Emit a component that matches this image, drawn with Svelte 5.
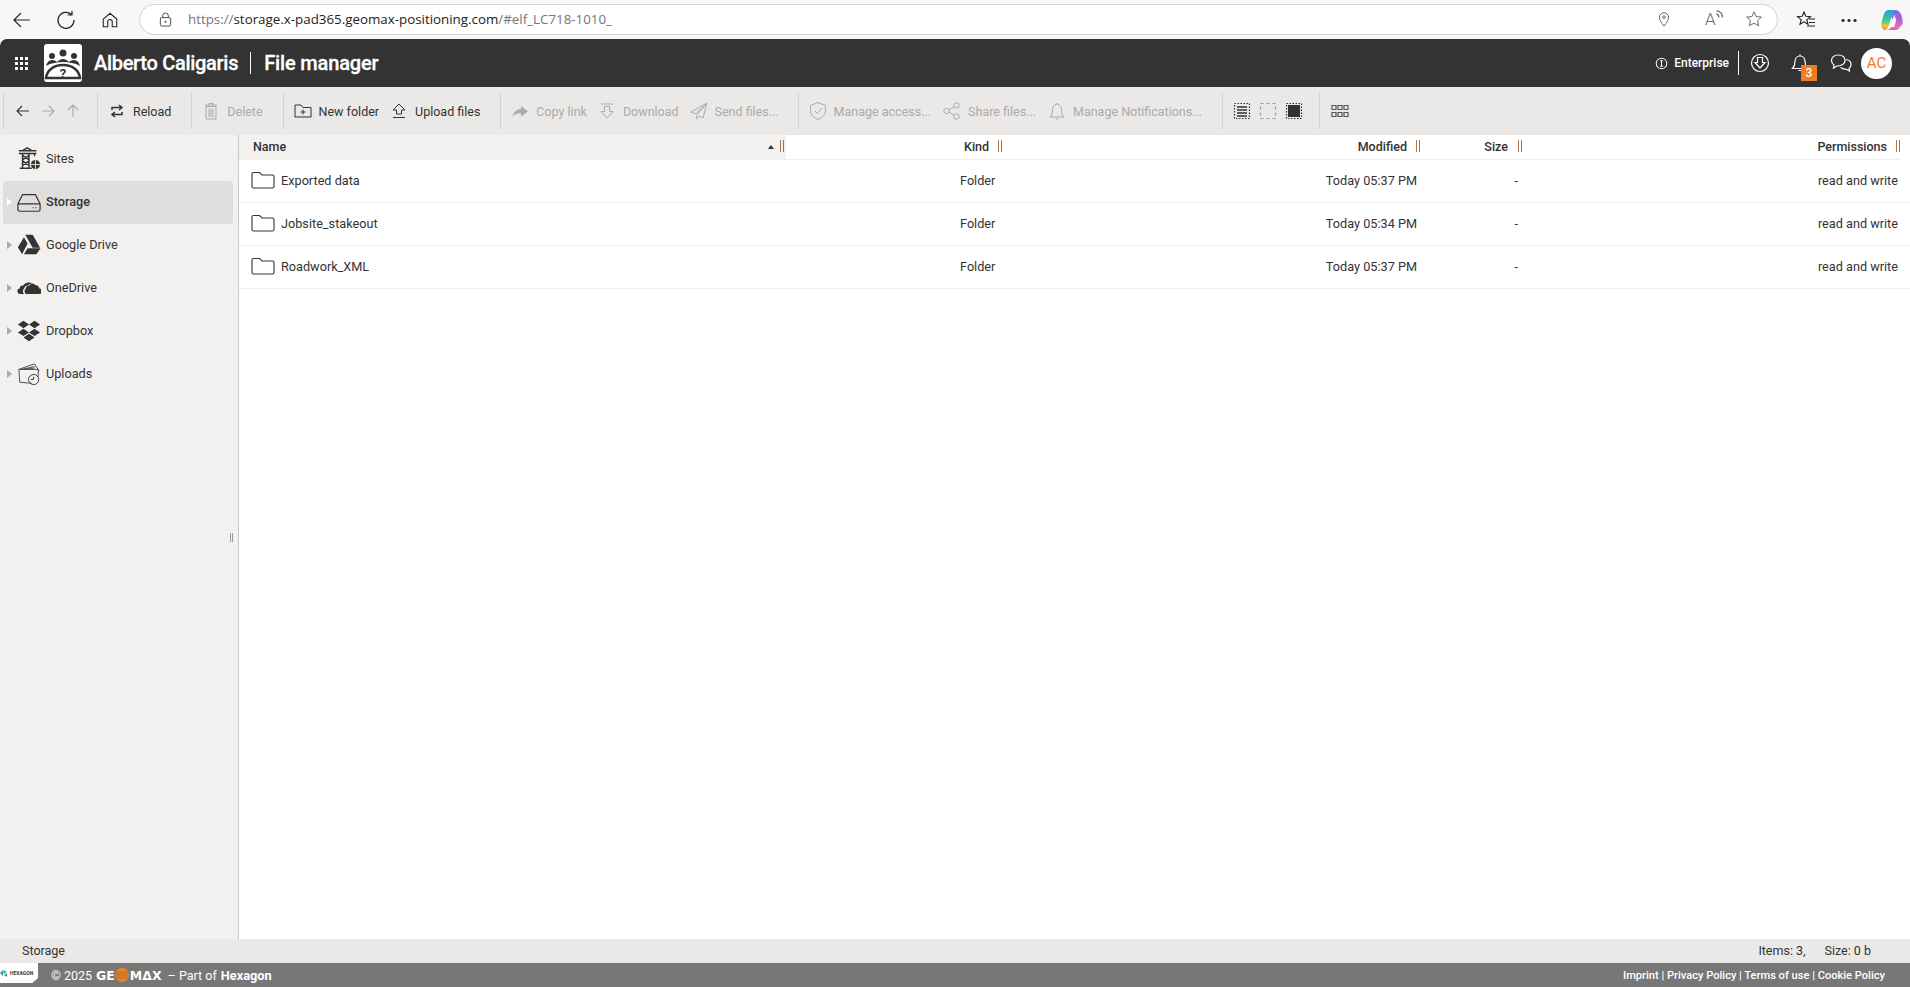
<script>
  const ic = {
    back: '<path d="M16 10H4M9 5l-5 5 5 5"/>',
    fwd: '<path d="M4 10h12M11 5l5 5-5 5"/>',
    up: '<path d="M10 16V4M5 9l5-5 5 5"/>',
    reload: '<path d="M5 9V6.500h9.500M12 4l3 2.500-3 2.500M15 11v2.500H5.500M8 11l-3 2.500 3 2.500" stroke-width="1.500"/>',
    del: '<path d="M4 4h12M8 4V2.500h4V4M5 5.500h10V18H5zM8 7.500v8.500M10 7.500v8.500M12 7.500v8.500"/>',
    newf: '<path d="M2 4h6l2 2.500h8V16H2zM7.500 11h5M10 8.500v5"/>',
    upl: '<path d="M10 3l6 6h-3.500v4h-5V9H4zM4 16.500h12"/>',
    copy: '<path d="M11 5l7 5.500-7 5v-3.200c-4 0-6 1-8.500 3.200C3.500 11.500 6 8.500 11 8z" fill="#aaa" stroke="none"/>',
    dl: '<path d="M4 3h12M7.500 5.500v5H4l6 6.500 6-6.500h-3.500v-5z"/>',
    send: '<path d="M18 2L2 11l4.500 2L18 2zM18 2L8 14l-.5 4 3-3 3.500 2z"/>',
    shield: '<path d="M10 1.500l7.500 3v5c0 4.500-3.500 7.500-7.500 9-4-1.500-7.500-4.500-7.500-9v-5zM6.500 9.500l3 3 4.500-5.500"/>',
    share: '<circle cx="4.500" cy="10" r="2.700"/><circle cx="14.500" cy="4.500" r="2.700"/><circle cx="14.500" cy="15.500" r="2.700"/><path d="M7 9l5-3.300M7 11l5 3.300"/>',
    bell: '<path d="M3 16h14c-2-2-2.500-3.500-2.500-7.500 0-3-2-5.500-4.500-5.500S5.500 5.500 5.500 8.500C5.500 12.500 5 14 3 16zM9 18h2M10 2v1"/>'
  };
  const groups = [
    { items: [{ i: 'reload', t: 'Reload', on: true }] },
    { items: [{ i: 'del', t: 'Delete' }] },
    { tight: 'first', items: [{ i: 'newf', t: 'New folder', on: true }, { i: 'upl', t: 'Upload files', on: true }] },
    { tight: 'all', items: [{ i: 'copy', t: 'Copy link' }, { i: 'dl', t: 'Download' }, { i: 'send', t: 'Send files...' }] },
    { items: [{ i: 'shield', t: 'Manage access...' }, { i: 'share', t: 'Share files...' }, { i: 'bell', t: 'Manage Notifications...' }] }
  ];
  const nav = ['Sites', 'Storage', 'Google Drive', 'OneDrive', 'Dropbox', 'Uploads'];
  const rows = [
    ['Exported data', 'Today 05:37 PM'],
    ['Jobsite_stakeout', 'Today 05:34 PM'],
    ['Roadwork_XML', 'Today 05:37 PM']
  ];
  const grid = Array.from({ length: 9 }, (_, n) => n);
</script>

<div class="page">
  <div class="browser">
    <svg class="b-ic" viewBox="0 0 20 20"><path d="M18 10H2M9 3l-7 7 7 7" /></svg>
    <svg class="b-ic" viewBox="0 0 20 20"><path d="M15.500 4.500A8 8 0 1 0 18 10M16 1v4h-4.500" /></svg>
    <svg class="b-ic" viewBox="0 0 20 20"><path d="M2.500 9L10 2.500 17.500 9v8.500h-5V12a2.500 2.500 0 0 0-5 0v5.500h-5z" /></svg>
    <div class="address">
      <svg class="lock" viewBox="0 0 16 16"><rect x="2.500" y="6" width="11" height="9" rx="1.500" /><path d="M5 6V4a3 3 0 0 1 6 0v2" /><circle cx="8" cy="10.500" r=".7" /></svg>
      <span class="url"><i>https://</i>storage.x-pad365.geomax-positioning.com<i>/#elf_LC718-1010_</i></span>
      <div class="addr-right">
        <svg viewBox="0 0 20 20"><path d="M10 18c-3-4-5-7-5-10a5 5 0 0 1 10 0c0 3-2 6-5 10z" /><circle cx="10" cy="8" r="1.500" /></svg>
        <span class="aloud">A<svg viewBox="0 0 8 10"><path d="M1 4c1.500.3 2 1.500 2 3M1 1.500c3 .3 5 2.500 5 5.500" /></svg></span>
        <svg class="star" viewBox="0 0 20 20"><path d="M10 2l2.400 5.300 5.800.6-4.300 3.900 1.200 5.700L10 14.600l-5.100 2.900 1.200-5.700-4.300-3.900 5.800-.6z" /></svg>
      </div>
    </div>
    <div class="b-right">
      <svg viewBox="0 0 20 20"><path d="M8 2l1.800 4.300 4.700.4-3.600 3 1.100 4.600L8 11.800l-4 2.500 1.100-4.600-3.600-3 4.700-.4zM13 9h6M13 12.500h6M11 16h8" /></svg>
      <span class="dots">···</span>
      <svg class="copilot" viewBox="0 0 24 24">
        <defs>
          <linearGradient id="cp1" x1="0" y1="0" x2="0" y2="1"><stop offset="0" stop-color="#1f9fe8" /><stop offset=".5" stop-color="#38c98a" /><stop offset=".8" stop-color="#f5c33c" /><stop offset="1" stop-color="#f0803c" /></linearGradient>
          <linearGradient id="cp2" x1="0" y1="0" x2="0" y2="1"><stop offset="0" stop-color="#6a6ff0" /><stop offset=".5" stop-color="#a85fe0" /><stop offset="1" stop-color="#f06aa0" /></linearGradient>
        </defs>
        <path d="M15 1c3.500 0 6 2 7 5l1.500 6c1 4.500-1.500 8-5.500 8h-4c1-3 0-5.500-1-8l-2-4c-1-3 1-6 4-7z" fill="url(#cp2)" />
        <path d="M6 23h9c3 0 4.500-1.500 5.500-3H11c-1 2-3 3-5 3z" fill="#e060b0" />
        <path d="M9 1h7c-2 1-3.300 3-3.800 5L8.500 18c-.7 3-2.500 5-5 5C1 22 0 19 .5 15L3 6c.8-3 3-5 6-5z" fill="url(#cp1)" />
        <path d="M14.500 6l-3.800 13h3.800l2-6.500z" fill="#fff" />
      </svg>
    </div>
  </div>

  <header class="head">
    <div class="apps">
      {#each grid as n (n)}<span></span>{/each}
    </div>
    <div class="logo">
      <svg viewBox="0 0 38 38">
        <circle cx="19" cy="9" r="3.500" /><circle cx="8" cy="12" r="3" /><circle cx="30" cy="12" r="3" />
        <path d="M2 22c1-4 3-6 6-6s4 1 5 2c2-2 4-3 6-3s4 1 6 3c1-1 2-2 5-2s5 2 6 6c-5-3-11-4-17-4s-12 1-17 4z" />
        <path d="M2 34c1-8 8-13 17-13s16 5 17 13z" fill="none" stroke="#333" stroke-width="2.500" />
        <text x="19" y="34" text-anchor="middle" class="q">?</text>
      </svg>
    </div>
    <span class="title">Alberto Caligaris</span>
    <span class="title second">File manager</span>
    <div class="head-right">
      <svg class="info" viewBox="0 0 14 14"><circle cx="7" cy="7" r="5.700" /><path d="M5.500 4h3M5.500 10h3M7 4v6" /></svg>
      <span class="ent">Enterprise</span>
      <span class="hsep"></span>
      <svg class="h-ic dl" viewBox="0 0 20 20"><circle cx="10" cy="10" r="8.500" /><path d="M7.500 4.500h5v5h2.500L10 15 5 9.500h2.500z" /></svg>
      <div class="bell">
        <svg class="h-ic" viewBox="0 0 20 20"><path d="M2.500 15.500h15c-2-2-2.500-3.500-2.500-7 0-3-2-5.500-5-5.500S5 5.500 5 8.500c0 3.500-.5 5-2.500 7zM8.500 17.500h3M10 1.500V3" /></svg>
        <span class="badge">3</span>
      </div>
      <svg class="h-ic chat" viewBox="0 0 22 20"><path d="M8 2C4 2 1.500 4.500 1.500 7.500c0 2 1 3.500 2.500 4.500l-.5 3 3.500-2c3 0 8-1.500 8-5.500C15 4 12 2 8 2z" /><path d="M16 6.500c3 .5 5 2.500 5 5 0 1.500-.8 3-2 4l.5 2.500-3-1.700c-2.500 0-4.500-.5-6-2" /></svg>
      <span class="avatar">AC</span>
    </div>
  </header>

  <div class="toolbar">
    <div class="tgroup arrows">
      <svg class="tic dark" viewBox="0 0 20 20">{@html ic.back}</svg>
      <svg class="tic" viewBox="0 0 20 20">{@html ic.fwd}</svg>
      <svg class="tic" viewBox="0 0 20 20">{@html ic.up}</svg>
    </div>
    {#each groups as g}
      <div class="tgroup">
        {#each g.items as it, k}
          <div class="titem" class:on={it.on} class:tight={g.tight === 'all' || (g.tight === 'first' && k === 0)}>
            <svg class="tic" viewBox="0 0 20 20">{@html ic[it.i]}</svg>
            <span>{it.t}</span>
          </div>
        {/each}
      </div>
    {/each}
    <div class="tgroup views">
      <svg class="vic" viewBox="0 0 18 18"><rect x="1.500" y="1.500" width="15" height="15" stroke-dasharray="1.500 1.500" /><path d="M4 5h10M4 8h10M4 11h10M4 14h10" stroke-width="1.500" /></svg>
      <svg class="vic light" viewBox="0 0 18 18"><rect x="1.500" y="1.500" width="15" height="15" stroke-dasharray="3 3" /></svg>
      <svg class="vic" viewBox="0 0 18 18"><rect x="1.500" y="1.500" width="15" height="15" stroke-dasharray="1.500 1.500" /><rect x="3" y="3" width="12" height="12" fill="#333" stroke="none" /></svg>
    </div>
    <div class="tgroup last">
      <svg class="vic small" viewBox="0 0 18 14"><path d="M1 1.500h4v4H1zM7 1.500h4v4H7zM13 1.500h4v4h-4zM1 8.500h4v4H1zM7 8.500h4v4H7zM13 8.500h4v4h-4z" /></svg>
    </div>
  </div>

  <div class="main">
    <aside class="side">
      {#each nav as n, idx}
        <div class="nav" class:sel={n === 'Storage'}>
          {#if idx > 0}<span class="tri"></span>{:else}<span class="tri none"></span>{/if}
          <svg class="nic" viewBox="0 0 26 26">
            {#if n === 'Sites'}
              <path d="M2 4h19M2 7h19M6 4l5-3 5 3M6 7v16M13 7v16M6 9l7 5M13 9l-7 5M6 15l7 5M13 15l-7 5M3 23h13M19 7v3" stroke-width="1.500" />
              <circle cx="20" cy="19" r="5" fill="#333" stroke="none" />
              <path d="M15 19h10M20 14v10" stroke="#f3f1ef" stroke-width="1" />
            {:else if n === 'Storage'}
              <path d="M6 5h14l5 10v6a2 2 0 0 1-2 2H3a2 2 0 0 1-2-2v-6zM1 15h24M17 19h1M20 19h1" stroke-width="1.300" />
            {:else if n === 'Google Drive'}
              <path d="M9 2h8l8 14h-8zM7.500 4.500l4 7L5.500 23 1 15.500zM7.500 23l4-6.500h14L21 23z" fill="#333" stroke="none" />
            {:else if n === 'OneDrive'}
              <path d="M9.500 19.500h14a3 3 0 0 0 .8-6c-.3-2.200-2-3.700-4-3.500-1.700-2.300-5.300-2.300-7 .2-2.300-.2-4 1.600-3.800 3.800-1.800.7-1.800 3.700 0 5.500z" fill="#333" stroke="none" />
              <path d="M7.500 19.500H4a3 3 0 0 1-1-6c-.2-2.200 1.800-3.500 3.500-3C8 7.500 13 5.500 17 8.500c-2-.4-4 .3-5 1.700-2.500-.2-4 1.600-4.200 3.400-1.800 1.200-1.800 4-.3 5.900z" fill="#333" stroke="none" />
            {:else if n === 'Dropbox'}
              <path d="M7 2l6 4-6 4-6-4zM19 2l6 4-6 4-6-4zM7 10.500l6 4-6 4-6-4zM19 10.500l6 4-6 4-6-4zM13 16l6 4-6 4-6-4z" fill="#333" stroke="none" />
            {:else}
              <path d="M2 8l17-6 5 8M5 8l14-3M8 8l11-1.500M2 8l1 14 13 1M2 8h21v8" stroke-width=".9" />
              <circle cx="18" cy="19" r="5.500" stroke-width="1" />
              <path d="M18 16v3h-3" stroke-width="1" />
            {/if}
          </svg>
          <span>{n}</span>
        </div>
      {/each}
      <span class="grip"></span>
    </aside>

    <section class="files">
      <div class="row hrow">
        <div class="c name hname">Name<span class="sort"></span><span class="h"></span></div>
        <div class="c kind">Kind<span class="h"></span></div>
        <div class="c mod">Modified<span class="h"></span></div>
        <div class="c size">Size<span class="h"></span></div>
        <div class="c perm">Permissions<span class="h"></span></div>
      </div>
      {#each rows as r}
        <div class="row frow">
          <div class="c name">
            <svg class="folder" viewBox="0 0 24 18"><path d="M1 3a1.500 1.500 0 0 1 1.500-1.500h6L11 4h10.500A1.500 1.500 0 0 1 23 5.500v10a1.500 1.500 0 0 1-1.500 1.500h-19A1.500 1.500 0 0 1 1 15.500z" /></svg>
            <span>{r[0]}</span>
          </div>
          <div class="c kind">Folder</div>
          <div class="c mod">{r[1]}</div>
          <div class="c size">-</div>
          <div class="c perm">read and write</div>
        </div>
      {/each}
    </section>
  </div>

  <div class="status">
    <span>Storage</span>
    <span class="items">Items: 3,</span>
    <span class="sz">Size: 0 b</span>
  </div>

  <footer class="foot">
    <div class="hex">
      <svg viewBox="0 0 10 10"><path d="M0 5l3-3v6zM3.500 2l3 2-3 2zM4 7l3-2v4z" fill="#2a9d8f" /></svg>
      <span>HEXAGON</span>
    </div>
    <span class="copy">© 2025</span>
    <span class="geo">GE</span>
    <svg class="ball" viewBox="0 0 14 14"><circle cx="7" cy="7" r="7" fill="#e8832a" /><path d="M1 4h12M.3 6h13.400M.3 8h13.400M1 10h12" stroke="#9a5a20" stroke-width=".5" /></svg>
    <span class="geo">MΔX</span>
    <span class="part">– Part of</span>
    <b>Hexagon</b>
    <span class="links">Imprint | Privacy Policy | Terms of use | Cookie Policy</span>
  </footer>
</div>

<style>
  :global(body) {
    margin: 0;
    background: #fff;
  }
  .page {
    width: 1910px;
    height: 987px;
    display: flex;
    flex-direction: column;
    overflow: hidden;
    font-family: Roboto, "Liberation Sans", sans-serif;
    color: #333;
    font-size: 12.5px;
  }
  svg {
    fill: none;
    stroke: currentColor;
    flex: none;
  }

  /* browser chrome */
  .browser {
    height: 39px;
    background: #f7f7f7;
    display: flex;
    align-items: center;
    padding-left: 12px;
    box-sizing: border-box;
    color: #222;
  }
  .b-ic {
    width: 20px;
    height: 20px;
    margin-right: 24px;
    stroke-width: 1.2;
  }
  .b-ic:nth-child(2) {
    margin-right: 25px;
  }
  .b-ic:nth-child(3) {
    width: 18px;
    height: 18px;
    margin-right: 20px;
  }
  .address {
    width: 1639px;
    height: 31px;
    box-sizing: border-box;
    margin-top: -1px;
    border: 1px solid #d2d2d2;
    border-radius: 16px;
    background: #fff;
    display: flex;
    align-items: center;
    padding-left: 18px;
  }
  .lock {
    width: 15px;
    height: 15px;
    color: #444;
    stroke-width: 1;
  }
  .url {
    margin-left: 15px;
    font-family: "Open Sans", "Liberation Sans", sans-serif;
    font-size: 13.35px;
    color: #222;
  }
  .url i {
    font-style: normal;
    color: #767676;
  }
  .addr-right {
    margin-left: auto;
    display: flex;
    align-items: center;
    margin-right: 14px;
    color: #666;
  }
  .addr-right svg {
    width: 18px;
    height: 18px;
    stroke-width: 1.100;
  }
  .aloud {
    margin-left: 32px;
    font-size: 17px;
    font-weight: 300;
    width: 24px;
    display: flex;
    align-items: center;
  }
  .addr-right .aloud svg {
    width: 10px;
    height: 12px;
    margin: -8px 0 0 -1px;
    stroke-width: 1;
  }
  .addr-right .star {
    margin-left: 16px;
  }
  .b-right {
    display: flex;
    align-items: center;
    margin-left: 18px;
    color: #222;
  }
  .b-right svg {
    width: 20px;
    height: 20px;
    stroke-width: 1.100;
  }
  .dots {
    margin-left: 24px;
    font-size: 20px;
    font-weight: 700;
    width: 20px;
    line-height: 20px;
  }
  .b-right .copilot {
    width: 22px;
    height: 22px;
    margin-left: 21px;
    stroke: none;
  }

  /* app header */
  .head {
    height: 48px;
    background: #333;
    color: #fff;
    border-radius: 7px 7px 0 0;
    display: flex;
    align-items: center;
    flex: none;
    padding-left: 15px;
  }
  .apps {
    display: grid;
    grid-template-columns: repeat(3, 3px);
    gap: 2px;
    width: 16px;
  }
  .apps span {
    width: 3px;
    height: 3px;
    background: #fff;
  }
  .logo {
    width: 38px;
    height: 38px;
    margin-left: 13px;
    background: #fff;
    border-radius: 3px;
    display: flex;
    color: #333;
  }
  .logo svg {
    width: 38px;
    height: 38px;
    fill: #333;
    stroke: none;
  }
  .q {
    font: 700 13px Roboto, sans-serif;
    fill: #333;
  }
  .title {
    margin-left: 12px;
    font-size: 20px;
    font-weight: 500;
    letter-spacing: -0.3px;
    -webkit-text-stroke: 0.3px #fff;
  }
  .second {
    margin-left: 12px;
    padding-left: 14px;
    position: relative;
    letter-spacing: -0.15px;
  }
  .second::before {
    content: "";
    position: absolute;
    left: 0;
    top: 1px;
    bottom: 1px;
    width: 1px;
    background: #fff;
  }
  .head-right {
    margin-left: auto;
    display: flex;
    align-items: center;
    padding-right: 18px;
  }
  .info {
    width: 13px;
    height: 13px;
    stroke-width: 1.100;
  }
  .ent {
    margin-left: 6px;
    font-size: 12px;
    font-weight: 500;
  }
  .hsep {
    width: 1px;
    height: 24px;
    background: #fff;
    margin: 0 11px 0 9px;
  }
  .h-ic {
    width: 20px;
    height: 20px;
    stroke-width: 1.200;
  }
  .bell {
    position: relative;
    margin-left: 20px;
    display: flex;
  }
  .badge {
    position: absolute;
    left: 11px;
    top: 12px;
    width: 16px;
    height: 16px;
    background: #f37b20;
    color: #fff;
    font-size: 12px;
    font-weight: 500;
    line-height: 16px;
    text-align: center;
  }
  .chat {
    width: 22px;
    margin-left: 20px;
  }
  .avatar {
    width: 31px;
    height: 31px;
    margin-left: 9px;
    border-radius: 50%;
    background: #fff;
    color: #f37b20;
    font-size: 15px;
    line-height: 31px;
    text-align: center;
  }

  /* toolbar */
  .toolbar {
    height: 48px;
    flex: none;
    background: #ebe9e7;
    display: flex;
    align-items: center;
    padding-left: 3px;
    font-size: 12.5px;
  }
  .tgroup {
    display: flex;
    align-items: center;
    height: 36px;
    padding: 0 9px 0 9px;
    border-left: 1px solid #d4d2d0;
    color: #aaa;
  }
  .arrows {
    gap: 5px;
    padding-right: 14px;
  }
  .titem {
    display: flex;
    align-items: center;
    gap: 6px;
    white-space: nowrap;
    padding-right: 11px;
  }
  .titem.tight {
    padding-right: 10px;
  }
  .titem.on {
    color: #333;
  }
  .tic {
    width: 20px;
    height: 20px;
    stroke-width: 1;
  }
  .arrows .tic {
    stroke-width: 1.100;
    width: 20px;
  }
  .tic.dark {
    color: #333;
  }
  .views {
    gap: 8px;
    padding: 0 16px 0 10px;
    color: #333;
  }
  .vic {
    width: 18px;
    height: 18px;
    stroke-width: 1.200;
  }
  .vic.light {
    color: #999;
  }
  .last {
    padding-left: 11px;
    padding-right: 0;
  }
  .vic.small {
    height: 14px;
    color: #555;
  }

  /* main */
  .main {
    flex: 1;
    display: flex;
    min-height: 0;
  }
  .side {
    width: 238px;
    flex: none;
    background: #f3f1ef;
    border-right: 1px solid #c8c8c8;
    box-sizing: content-box;
    position: relative;
    padding-top: 3px;
  }
  .nav {
    height: 43px;
    margin: 0 5px 0 3px;
    display: flex;
    align-items: center;
    border-radius: 3px;
    font-size: 12.7px;
    box-sizing: border-box;
    padding-bottom: 2px;
  }
  .nav.sel {
    background: #dfdedc;
    font-weight: 500;
  }
  .tri {
    width: 0;
    height: 0;
    margin-left: 4px;
    border-left: 5px solid #aaa;
    border-top: 4.500px solid transparent;
    border-bottom: 4.500px solid transparent;
  }
  .tri.none {
    border-left-color: transparent;
  }
  .sel .tri {
    border-left-color: #fff;
  }
  .nic {
    width: 24px;
    height: 24px;
    margin-left: 5px;
    margin-right: 5px;
    stroke-width: 1;
  }
  .grip {
    position: absolute;
    right: 5px;
    top: 398px;
    width: 3px;
    height: 9px;
    border-left: 1px solid #999;
    border-right: 1px solid #999;
    box-sizing: border-box;
  }

  .files {
    flex: 1;
    min-width: 0;
  }
  .row {
    display: grid;
    grid-template-columns: 547px 218px 418px 102px 1fr;
    align-items: center;
    font-size: 12.7px;
  }
  .hrow {
    height: 25px;
    font-weight: 500;
    font-size: 12.5px;
    border-bottom: 1px solid #eee;
    box-sizing: border-box;
    margin-right: 10px;
  }
  .frow {
    height: 43px;
    box-sizing: border-box;
    border-bottom: 1px solid #eee;
  }
  .c {
    display: flex;
    align-items: center;
    height: 100%;
    position: relative;
    white-space: nowrap;
    box-sizing: border-box;
    padding-bottom: 2px;
  }
  .hname {
    background: #f3f1ef;
  }
  .name {
    padding-left: 12px;
  }
  .hrow .name {
    padding-left: 14px;
  }
  .folder {
    width: 24px;
    height: 18px;
    margin-right: 6px;
    stroke-width: 1.100;
  }
  .sort {
    position: absolute;
    right: 12px;
    top: 10px;
    border-left: 3px solid transparent;
    border-right: 3px solid transparent;
    border-bottom: 4px solid #333;
  }
  .h {
    position: absolute;
    right: 2px;
    top: 5px;
    width: 4px;
    height: 12px;
    border-left: 1.500px solid #b07a50;
    border-right: 1.500px solid #5a80a8;
    box-sizing: border-box;
  }
  .perm .h {
    right: 0;
  }
  .kind {
    padding-left: 174px;
  }
  .hrow .kind {
    padding-left: 178px;
  }
  .mod {
    justify-content: flex-end;
    padding-right: 5px;
  }
  .hrow .mod {
    padding-right: 15px;
  }
  .size {
    justify-content: flex-end;
    padding-right: 6px;
  }
  .hrow .size {
    padding-right: 16px;
  }
  .perm {
    justify-content: flex-end;
    padding-right: 12px;
  }
  .hrow .perm {
    padding-right: 13px;
  }

  .status {
    height: 24px;
    flex: none;
    box-sizing: border-box;
    background: #ebe9e7;
    display: flex;
    align-items: center;
    padding: 0 0 2px 22px;
    font-size: 12.5px;
  }
  .items {
    margin-left: auto;
  }
  .sz {
    margin-left: 19px;
    margin-right: 39px;
  }

  .foot {
    height: 24px;
    flex: none;
    background: #777;
    color: #fff;
    display: flex;
    align-items: center;
    font-size: 12px;
    position: relative;
  }
  .hex {
    width: 38px;
    height: 20px;
    align-self: flex-start;
    background: #fff;
    clip-path: polygon(0 0, 100% 0, 100% 75%, 85% 100%, 0 100%);
    display: flex;
    align-items: center;
    color: #333;
    font-size: 5px;
    font-weight: 700;
  }
  .hex svg {
    width: 10px;
    height: 10px;
    stroke: none;
  }
  .copy {
    margin-left: 13px;
    font-size: 12.500px;
  }
  .geo {
    margin-left: 4px;
    font-family: "DejaVu Sans", sans-serif;
    font-weight: 700;
    font-size: 12.500px;
  }
  .ball {
    width: 14px;
    height: 14px;
    margin-left: 0;
    stroke: none;
  }
  .foot .ball + .geo {
    margin-left: 1px;
  }
  .part {
    margin-left: 6px;
    font-size: 12.500px;
  }
  .foot b {
    margin-left: 4px;
    font-size: 12.800px;
  }
  .links {
    margin-left: auto;
    margin-right: 25px;
    font-size: 11.100px;
    font-weight: 500;
  }
</style>
